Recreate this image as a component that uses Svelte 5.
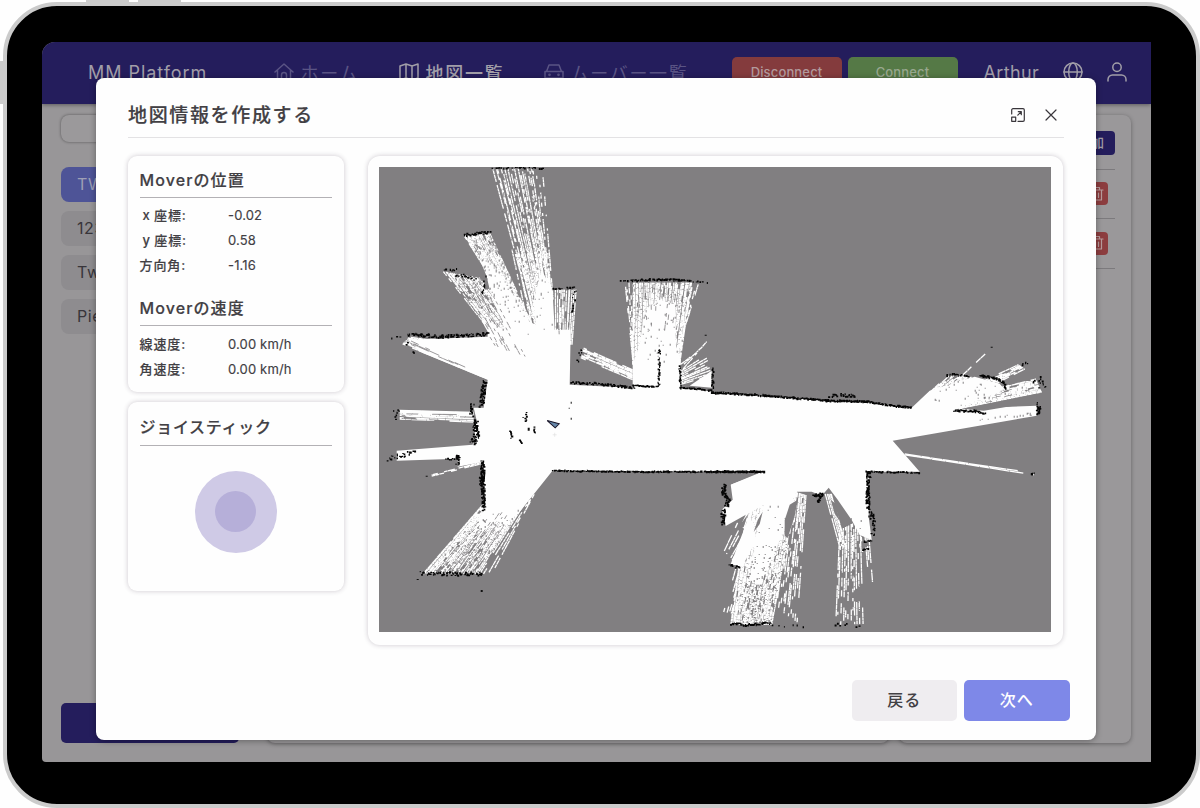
<script>
  const position = [
    ['x 座標:', '-0.02'],
    ['y 座標:', '0.58'],
    ['方向角:', '-1.16']
  ];
  const speed = [
    ['線速度:', '0.00 km/h'],
    ['角速度:', '0.00 km/h']
  ];
  const maps = ['TWR', '123', 'Two', 'Pier'];

  let seed = 20231;
  function rnd() {
    seed = (seed * 1664525 + 1013904223) % 4294967296;
    return seed / 4294967296;
  }
  const f = (v) => v.toFixed(1);

  // Broken laser rays running from a near edge (a-b) to a far edge (c-d).
  function beam([ax, ay, bx, by, cx, cy, dx, dy], n, near, far, dash = 4) {
    let d = '';
    for (let i = 0; i < n; i++) {
      const t = (i + (rnd() - 0.5) * 0.7) / Math.max(1, n - 1);
      const x0 = ax + (bx - ax) * t, y0 = ay + (by - ay) * t;
      const x1 = cx + (dx - cx) * t, y1 = cy + (dy - cy) * t;
      const len = Math.hypot(x1 - x0, y1 - y0);
      let s = 0;
      while (s < len) {
        const l = dash * (0.5 + rnd());
        const p = near + (far - near) * (s / len);
        const e = Math.min(len, s + l);
        if (rnd() < p) {
          d += `M${f(x0 + (x1 - x0) * s / len)} ${f(y0 + (y1 - y0) * s / len)}L${f(x0 + (x1 - x0) * e / len)} ${f(y0 + (y1 - y0) * e / len)}`;
        }
        s = e + 0.4;
      }
    }
    return d;
  }

  // Single cells thrown over the same kind of quad, denser towards the far edge.
  function specks([ax, ay, bx, by, cx, cy, dx, dy], n) {
    let d = '';
    for (let i = 0; i < n; i++) {
      const t = rnd(), s = Math.sqrt(rnd());
      const x0 = ax + (bx - ax) * t, y0 = ay + (by - ay) * t;
      const x1 = cx + (dx - cx) * t, y1 = cy + (dy - cy) * t;
      const h = rnd() > 0.6 ? 2 : 1;
      d += `M${Math.round(x0 + (x1 - x0) * s)} ${Math.round(y0 + (y1 - y0) * s)}h1v${h}h-1z`;
    }
    return d;
  }

  // Rough occupied cells scattered along a line.
  function rough(pts, spread = 1, step = 1.3, p = 0.9) {
    let d = '';
    for (let i = 0; i < pts.length - 1; i++) {
      const [x0, y0] = pts[i], [x1, y1] = pts[i + 1];
      const len = Math.hypot(x1 - x0, y1 - y0);
      for (let s = 0; s <= len; s += step) {
        if (rnd() > p) continue;
        const x = x0 + (x1 - x0) * s / len + (rnd() - 0.5) * 2 * spread;
        const y = y0 + (y1 - y0) * s / len + (rnd() - 0.5) * 2 * spread;
        const w = 1 + rnd() * 1.1, h = 1 + rnd() * 1.1;
        d += `M${f(x - w / 2)} ${f(y - h / 2)}h${f(w)}v${f(h)}h${f(-w)}z`;
      }
    }
    return d;
  }

  const rays = [
    beam([533, 318, 553, 300, 494, 170, 532, 169], 17, 1, 0.7, 4),
    beam([546, 300, 553, 300, 531, 170, 542, 169], 5, 0.95, 0.3, 3),
    beam([530, 330, 553, 310, 513, 250, 548, 250], 16, 1, 0.75, 3),
    beam([505, 300, 531, 322, 464, 236, 490, 234], 22, 1, 0.9, 4),
    beam([492, 333, 525, 335, 444, 272, 479, 278], 20, 1, 0.76, 4),
    beam([494, 381, 505, 350, 403, 344, 410, 337], 15, 1, 0.8, 6),
    beam([556, 345, 572, 345, 556, 290, 576, 290], 12, 1, 0.76, 6),
    beam([633, 365, 680, 365, 634, 283, 692, 283], 40, 1, 0.9, 5),
    beam([633, 360, 633, 350, 625, 283, 636, 283], 6, 0.7, 0.4, 4),
    beam([680, 360, 680, 345, 688, 283, 699, 283], 5, 0.9, 0.5, 4),
    beam([633, 380, 633, 370, 581, 358, 583, 348], 10, 0.95, 0.82, 6),
    beam([681, 385, 681, 372, 712, 376, 707, 356], 9, 0.85, 0.6, 5),
    beam([681, 372, 681, 365, 707, 342, 700, 350], 3, 0.6, 0.6, 4),
    beam([487, 500, 535, 488, 423, 574, 480, 574], 32, 1, 0.86, 5),
    beam([530, 500, 534, 495, 484, 574, 489, 578], 3, 0.9, 0.5, 4),
    beam([760, 480, 790, 490, 725, 552, 738, 567], 8, 1, 0.55, 6),
    beam([750, 490, 797, 490, 731, 625, 772, 625], 36, 1, 0.9, 4),
    beam([790, 490, 806, 495, 772, 605, 797, 622], 13, 0.95, 0.36, 5),
    beam([752, 512, 770, 510, 724, 612, 739, 615], 7, 0.9, 0.5, 6),
    beam([826, 494, 832, 494, 840, 545, 848, 550], 5, 0.95, 0.75, 5),
    beam([840, 530, 860, 520, 836, 625, 863, 624], 12, 0.95, 0.42, 5),
    beam([855, 492, 868, 510, 860, 550, 874, 585], 5, 0.85, 0.45, 5),
    beam([922, 400, 940, 396, 948, 376, 972, 377], 12, 1, 0.75, 5),
    beam([945, 400, 960, 402, 1019, 365, 1025, 369], 7, 0.9, 0.85, 6),
    beam([940, 402, 950, 411, 1036, 379, 1042, 392], 14, 1, 0.84, 6),
    beam([958, 380, 958, 380, 992, 348, 992, 348], 1, 0.85, 0.7, 5),
    beam([474, 413, 474, 422, 400, 411, 400, 419], 8, 0.88, 0.8, 10),
    beam([484, 462, 484, 463, 432, 475, 432, 476], 2, 0.95, 0.6, 5),
    beam([905, 454, 905, 455, 1035, 473, 1034, 475], 2, 1, 0.85, 14)
  ].join('');

  const shade = [
    beam([498, 350, 512, 355, 460, 285, 482, 290], 8, 0.2, 0.42, 4),
    beam([512, 352, 526, 357, 470, 270, 480, 270], 3, 0.35, 0.35, 3),
    beam([560, 340, 570, 340, 558, 293, 574, 293], 5, 0.15, 0.35, 6),
    beam([480, 375, 455, 362, 410, 344, 410, 341], 4, 0.1, 0.6, 8),
    beam([640, 345, 677, 345, 632, 285, 692, 285], 11, 0.02, 0.3, 4),
    beam([480, 520, 515, 508, 435, 573, 478, 573], 14, 0.12, 0.34, 3),
    beam([475, 415, 475, 421, 402, 414, 402, 418], 3, 0.3, 0.7, 10)
  ].join('');

  const dots = [
    specks([495, 310, 532, 340, 470, 238, 492, 240], 110),
    specks([515, 300, 531, 326, 488, 234, 494, 234], 60),
    specks([530, 350, 553, 330, 496, 175, 539, 172], 210),
    specks([495, 345, 530, 360, 450, 275, 480, 280], 60),
    specks([636, 375, 678, 370, 626, 285, 697, 285], 90),
    specks([490, 510, 525, 505, 425, 572, 485, 572], 120),
    specks([765, 500, 795, 500, 735, 622, 773, 622], 200),
    specks([842, 510, 864, 510, 838, 622, 864, 622], 60),
    specks([925, 405, 955, 408, 950, 380, 1036, 388], 35),
    specks([955, 422, 960, 421, 1033, 411, 1033, 416], 16)
  ].join('');

  const walls = [
    rough([[493, 169], [520, 168], [544, 169]], 0.8, 1.8, 0.6),
    rough([[464, 236], [476, 234], [490, 233]], 1.3, 0.8),
    rough([[444, 271], [458, 270]], 1, 1.5, 0.8),
    rough([[455, 277], [465, 276], [476, 280]], 1.2, 1.4),
    rough([[486, 276], [483, 294]], 1.4, 1.2),
    rough([[409, 335], [440, 337], [483, 335], [488, 333]], 1.6, 0.65),
    rough([[394, 339], [405, 337], [410, 350], [418, 352]], 2, 3, 0.7),
    rough([[554, 289], [576, 288]], 0.8, 1.6),
    rough([[576, 290], [572, 314]], 1.6, 3, 0.8),
    rough([[621, 282], [634, 281]], 0.8, 2.5),
    rough([[634, 281], [660, 280], [685, 281]], 1.1, 0.8),
    rough([[685, 281], [708, 283]], 0.8, 2.2),
    rough([[581, 348], [579, 361]], 2.5, 1.4, 0.8),
    rough([[571, 383], [595, 384], [634, 388]], 1, 0.6),
    rough([[633, 386], [659, 387]], 0.5, 0.8),
    rough([[660, 350], [659, 387]], 0.9, 1.1),
    rough([[680, 367], [681, 388], [713, 391]], 0.8, 0.9),
    rough([[713, 369], [713, 393]], 1, 1),
    rough([[713, 393], [752, 395], [790, 398], [828, 401], [868, 402], [885, 405], [912, 408]], 0.8, 0.5),
    rough([[829, 398], [836, 395], [852, 396], [856, 400]], 1.8, 0.7, 0.8),
    rough([[485, 381], [482, 406]], 2.2, 0.4),
    rough([[473, 406], [472, 415]], 2.2, 0.5),
    rough([[475, 421], [477, 434], [473, 444]], 2.8, 0.3),
    rough([[483, 461], [484, 510]], 1.7, 0.4),
    rough([[483, 470], [482, 485]], 2.5, 0.5),
    rough([[392, 411], [400, 412], [396, 418]], 2, 1.8, 0.8),
    rough([[388, 459], [397, 457], [417, 450]], 2.2, 0.9, 0.8),
    rough([[459, 455], [458, 464]], 2, 0.4),
    rough([[447, 459], [458, 459]], 1, 1.4),
    rough([[420, 573], [445, 574], [483, 574]], 1.9, 0.8),
    rough([[553, 471], [630, 472], [765, 472]], 0.5, 0.7),
    rough([[708, 472], [765, 472]], 0.9, 0.8),
    rough([[725, 485], [723, 493], [729, 499], [727, 506]], 2, 0.4),
    rough([[724, 509], [723, 525]], 2, 0.4),
    rough([[730, 565], [741, 568]], 1.2, 0.8),
    rough([[731, 624], [750, 625], [771, 623]], 1.2, 0.7),
    rough([[772, 625], [808, 627]], 1.5, 3.5, 0.6),
    rough([[833, 625], [865, 626]], 1.5, 3, 0.7),
    rough([[814, 496], [823, 494], [818, 502]], 1.1, 0.5),
    rough([[866, 472], [920, 473]], 0.6, 1),
    rough([[869, 473], [868, 508]], 1.9, 0.35),
    rough([[870, 508], [871, 518], [875, 515], [873, 535]], 1.8, 1, 0.8),
    rough([[864, 542], [872, 541]], 0.8, 0.9),
    rough([[864, 550], [869, 549]], 0.8, 0.9),
    rough([[947, 376], [955, 375], [970, 377]], 0.9, 1.3),
    rough([[981, 376], [994, 378], [1003, 382], [1007, 389]], 1.1, 0.5),
    rough([[1022, 365], [1028, 363]], 1.2, 1.2),
    rough([[1036, 381], [1041, 379], [1043, 388]], 3.5, 0.8, 0.8),
    rough([[1039, 405], [1038, 416]], 2, 0.5),
    rough([[954, 411], [974, 411], [985, 414]], 1, 0.7),
    rough([[1032, 474], [1035, 473]], 1, 0.9),
    rough([[526, 413], [527, 420], [523, 418]], 1.5, 1.2, 0.8),
    rough([[511, 432], [512, 438]], 1, 1),
    rough([[535, 427], [535, 433]], 1.2, 1),
    rough([[521, 441], [523, 444]], 0.8, 1)
  ].join('');
</script>

<div class="stage">
  <i class="key k1"></i><i class="key k2"></i><i class="key k3"></i>
  <div class="tablet">
    <div class="screen">
      <header>
        <span class="brand">MM Platform</span>
        <span class="nav home">
          <svg width="20" height="20" viewBox="0 0 20 20"><path d="M1 10L10 2l9 8M3.500 8.200V18h13V8.200M7.500 18v-5a2.500 2.500 0 0 1 5 0v5" /></svg>ホーム
        </span>
        <span class="nav maps">
          <svg width="20" height="20" viewBox="0 0 20 20"><path d="M1 4l6-2 6 2 6-2v14l-6 2-6-2-6 2zM7 2v14M13 4v14" /></svg>地図一覧
        </span>
        <span class="nav movers">
          <svg width="20" height="20" viewBox="0 0 20 20"><path d="M1 9.500h18v6.500H1zM2.500 9.500L5 3h10l2.500 6.500M3 16v2M17 16v2" /><circle cx="5.500" cy="12.800" r=".6" /><circle cx="14.500" cy="12.800" r=".6" /></svg>ムーバー一覧
        </span>
        <button class="disconnect">Disconnect</button>
        <button class="connect">Connect</button>
        <span class="user">Arthur</span>
        <svg class="globe" width="20" height="20" viewBox="0 0 20 20"><circle cx="10" cy="10" r="9" /><ellipse cx="10" cy="10" rx="4.300" ry="9" /><path d="M1 10h18" /></svg>
        <svg class="person" width="20" height="20" viewBox="0 0 20 20"><circle cx="10" cy="5.300" r="4.200" /><path d="M1 19v-1.500a4.500 4.500 0 0 1 4.500-4.500h9a4.500 4.500 0 0 1 4.500 4.500V19" /></svg>
      </header>
      <main>
        <aside>
          <div class="search"></div>
          {#each maps as name, i}
            <div class="item" class:active={i === 0}>{name}</div>
          {/each}
          <div class="add"></div>
        </aside>
        <section class="center"></section>
        <section class="right">
          <div class="row first"><b>追加</b></div>
          {#each [0, 1] as r (r)}
            <div class="row">
              <span class="trash"><svg width="14" height="16" viewBox="0 0 14 16"><path d="M1 4h12M4.500 4V1.500h5V4M2.500 4v10h9V4M5.500 7v4.500M8.500 7v4.500" /></svg></span>
            </div>
          {/each}
        </section>
      </main>
    </div>
  </div>

  <div class="modal">
    <div class="title">
      <h1>地図情報を作成する</h1>
      <svg class="expand" width="14" height="14" viewBox="0 0 14 14"><path d="M.7 6V2A1.300 1.300 0 0 1 2 .7h10A1.300 1.300 0 0 1 13.300 2v10a1.300 1.300 0 0 1-1.300 1.300H7M.7 9.200h4v4.100h-4zM6.800 7.200L10.300 3.700M7.300 3.700h3v3" /></svg>
      <svg class="close" width="12" height="12" viewBox="0 0 12 12"><path d="M1 1l10 10M11 1L1 11" /></svg>
    </div>
    <div class="body">
      <div class="side">
        <div class="card info">
          <h2>Moverの位置</h2>
          <dl>
            {#each position as [k, v], i}
              <dt class:inset={i < 2}>{k}</dt><dd>{v}</dd>
            {/each}
          </dl>
          <h2 class="second">Moverの速度</h2>
          <dl>
            {#each speed as [k, v]}
              <dt>{k}</dt><dd>{v}</dd>
            {/each}
          </dl>
        </div>
        <div class="card joy">
          <h2>ジョイスティック</h2>
          <div class="stick"><i></i></div>
        </div>
      </div>
      <div class="card map">
        <svg viewBox="379.300 167.500 672 464.500" preserveAspectRatio="none">
          <g fill="#fefefe">
            <path d="M488 380L420 352 409 340 488 337V332L480 318 505 330 490 290 487 277 480 260 492 262 530 322 536 325 534 300 542 270 553 293 555 330 571 330 570 385 633 388V365L640 345 645 310 660 300 676 305 676 345 681 360V388L713 392 828 401 868 402 912 408 930 391 975 377 1000 384 1005 390 957 409 1037 406V416L893 441 920 472H869V517L872 540 860 535 852 520 838 500 829 488 822 496 812 492 795 492 788 520 772 560 760 585 750 580 757 535 764 505 726 526 722 510 733 500 731 485 765 472H552L520 512 505 525 495 520 484 533 476 524 484 511V462L458 467V459L397 461V451L473 445 477 421 474 408H484z" />
            <path d="M474 412L400 410v3l72 3zM462 455L476 445 484 461z" />
            <path d="M750 515L731 564 742 567 757 540zM690 386L712 371V388zM731 485L765 471V490z" />
          </g>
          <path d={rays} stroke="#fefefe" stroke-width="1.300" fill="none" />
          <path d="M785 536l0-16 5-15 8-5-3 16-7 22zM831 500l5 4 4 17-5-7zM984 411L1037 402 1037 394 962 409zM754 532l4-12 5-8-3 12zM738 528l10-13-4 12z" fill="#817f81" />
          <path d={shade} stroke="#817f81" stroke-width=".8" fill="none" />
          <path d={dots} fill="#817f81" />
          <path d={walls} fill="#050505" />
          <path d="M481 590h2v2h-2zM417 579h2v1h-2zM426 476h2v1h-2zM571 402h1v2h-1zM569 408h1v1h-1zM571 418h1v2h-1zM705 335h2v1h-2zM991 347h2v1h-2zM528 428h2v3h-2z" fill="#111" />
          <path d="M547.500 420.800L559.500 424 555.500 428z" fill="#6688aa" stroke="#171326" stroke-width="1" />
          <path d="M555 433v4M553 435h4" stroke="#ddd" stroke-width=".6" />
        </svg>
      </div>
    </div>
    <div class="actions">
      <button class="back">戻る</button>
      <button class="next">次へ</button>
    </div>
  </div>
</div>

<style>
  :global(body) { margin: 0; background: #fefefe; }
  * { box-sizing: border-box; }
  svg { display: block; flex: none; }
  button { border: 0; padding: 0; font: inherit; color: inherit; }
  .stage {
    position: relative; width: 1200px; height: 808px; overflow: hidden; padding: 2px 0 0 3px;
    font-family: Inter, "Noto Sans CJK JP", sans-serif; color: #424044;
  }
  .key { position: absolute; background: #cbcbcb; }
  .k1 { left: 86px; top: 0; width: 43px; height: 5px; }
  .k2 { left: 138px; top: 0; width: 43px; height: 5px; }
  .k3 { left: 0; top: 61px; width: 5px; height: 43px; }
  .tablet {
    position: relative; width: 1197px; height: 806px; border: 4.500px solid #cbcbcb; border-radius: 54px;
    background: #000; padding: 36px 0 0 35px;
  }
  .screen {
    width: 1109px; height: 720px; background: #989698; border-radius: 13px 0 0 4px; overflow: hidden;
    display: flex; flex-direction: column;
  }
  header {
    height: 62px; flex: none; background: #241d5c; display: flex; align-items: center; padding: 0 0 2px 46px;
    color: #a19ea8; font-size: 18px; letter-spacing: .35px; box-shadow: 0 1px 4px rgba(0, 0, 0, .4); position: relative;
  }
  header svg, .trash svg { fill: none; stroke: currentColor; stroke-width: 1.500; stroke-linecap: round; stroke-linejoin: round; }
  .brand { width: 185.500px; letter-spacing: .95px; }
  .nav { display: flex; align-items: center; gap: 7px; letter-spacing: 1.700px; white-space: nowrap; }
  .home { width: 125px; color: #5a5484; }
  .maps { width: 145px; font-weight: 500; }
  .movers { width: 188px; color: #5a5484; }
  header button { width: 110px; height: 31px; border-radius: 5px; font-size: 13px; font-weight: 500; letter-spacing: .15px; }
  .disconnect { background: #843b3d; color: #b29a9d; margin-right: 6px; }
  .connect { background: #557946; color: #98a78f; }
  .user { margin-left: 26px; width: 79px; }
  .person { margin-left: 24px; }
  main { flex: 1; display: flex; padding: 11px 20px 19px 18.500px; }
  aside { width: 179px; display: flex; flex-direction: column; font-size: 16px; }
  .search { height: 27px; margin-bottom: 24.500px; border-radius: 8px; background: #9b999b; box-shadow: 0 0 3px rgba(0, 0, 0, .45); }
  .item { height: 35px; margin-bottom: 9px; border-radius: 8px; background: #8e8c8f; color: #38353a; padding-left: 16.500px; line-height: 35px; letter-spacing: .6px; }
  .active { background: #4e5497; color: #9ea0b5; }
  .add { margin-top: auto; height: 40px; border-radius: 5px; background: #241d5c; }
  .center, .right { border-radius: 8px; background: #9a989a; box-shadow: 0 1px 4px rgba(0, 0, 0, .35); }
  .center { width: 622px; margin-left: 28px; }
  .right { width: 232px; margin-left: 10px; padding: 5px 16px 0; }
  .row { height: 49.500px; border-bottom: 1px solid #7c7a7d; display: flex; align-items: center; justify-content: flex-end; padding-right: 7px; }
  .first { padding: 0 0 2px; }
  .row b { background: #241d5c; color: #a19ea8; width: 60px; height: 24px; border-radius: 4px; text-align: right; padding-right: 11px; font: 500 13px/22px "Noto Sans CJK JP", sans-serif; }
  .trash { width: 22px; height: 23px; border-radius: 4px; background: #8c3d3f; color: #b79b9c; display: grid; place-items: center; }
  .trash svg { stroke-width: 1.200; }
  .modal {
    position: absolute; left: 96px; top: 78px; width: 999.500px; height: 662px; border-radius: 8px; background: #fefefe;
    box-shadow: 0 1px 6px rgba(0, 0, 0, .35); display: flex; flex-direction: column;
  }
  .title { height: 60px; margin: 0 32px; border-bottom: 1.500px solid #e3e2e4; display: flex; align-items: center; padding: 14px 7px 0 0; flex: none; }
  h1 { margin: -2px 0 0; font-size: 19px; font-weight: 500; letter-spacing: 1.650px; flex: 1; -webkit-text-stroke: .2px #424044; }
  .title svg { fill: none; stroke: #39363b; stroke-width: 1.200; stroke-linecap: round; stroke-linejoin: round; }
  .expand { margin-right: 20px; }
  .body { display: flex; gap: 24px; padding: 17.500px 32.500px 0 31.500px; height: 506.500px; flex: none; }
  .side { width: 216px; display: flex; flex-direction: column; gap: 10px; }
  .card { border-radius: 9px; background: #fefefe; box-shadow: 0 0 5px rgba(45, 30, 55, .24); padding: 11px 12px; }
  .info { height: 236px; }
  .joy { height: 189.500px; }
  h2 { margin: 0; height: 31px; line-height: 27px; border-bottom: 1.500px solid #b3b1b5; font-size: 16px; font-weight: 500; letter-spacing: 1.100px; -webkit-text-stroke: .18px #424044; }
  .joy h2 { height: 33px; line-height: 29px; letter-spacing: .7px; }
  .second { margin-top: 17px; }
  dl { margin: 5px 0 0; display: grid; grid-template-columns: 88.500px 1fr; grid-auto-rows: 25.300px; align-items: center; font-size: 13px; }
  dt { font-weight: 500; letter-spacing: .9px; margin-top: -2px; -webkit-text-stroke: .15px #424044; }
  .inset { padding-left: 3px; word-spacing: -1px; }
  dd { margin: -.5px 0 0; letter-spacing: .15px; -webkit-text-stroke: .15px #424044; }
  .stick { width: 82px; height: 82px; margin: 25px auto 0; border-radius: 50%; background: #cfcae6; display: grid; place-items: center; }
  .stick i { width: 41px; height: 41px; border-radius: 50%; background: #b6afd9; }
  .map { flex: 1; border-radius: 12px; padding: 11.500px 12px 12px 11.500px; }
  .map svg { width: 100%; height: 465px; background: #817f81; }
  .actions { display: flex; justify-content: flex-end; gap: 7px; padding: 35.500px 26px 0; }
  .actions button { width: 105.500px; height: 40.500px; border-radius: 5px; font-size: 16px; font-weight: 500; letter-spacing: 1px; padding-bottom: 3px; }
  .back { background: #efedf0; }
  .next { background: #7e88e8; color: #fff; }
</style>
